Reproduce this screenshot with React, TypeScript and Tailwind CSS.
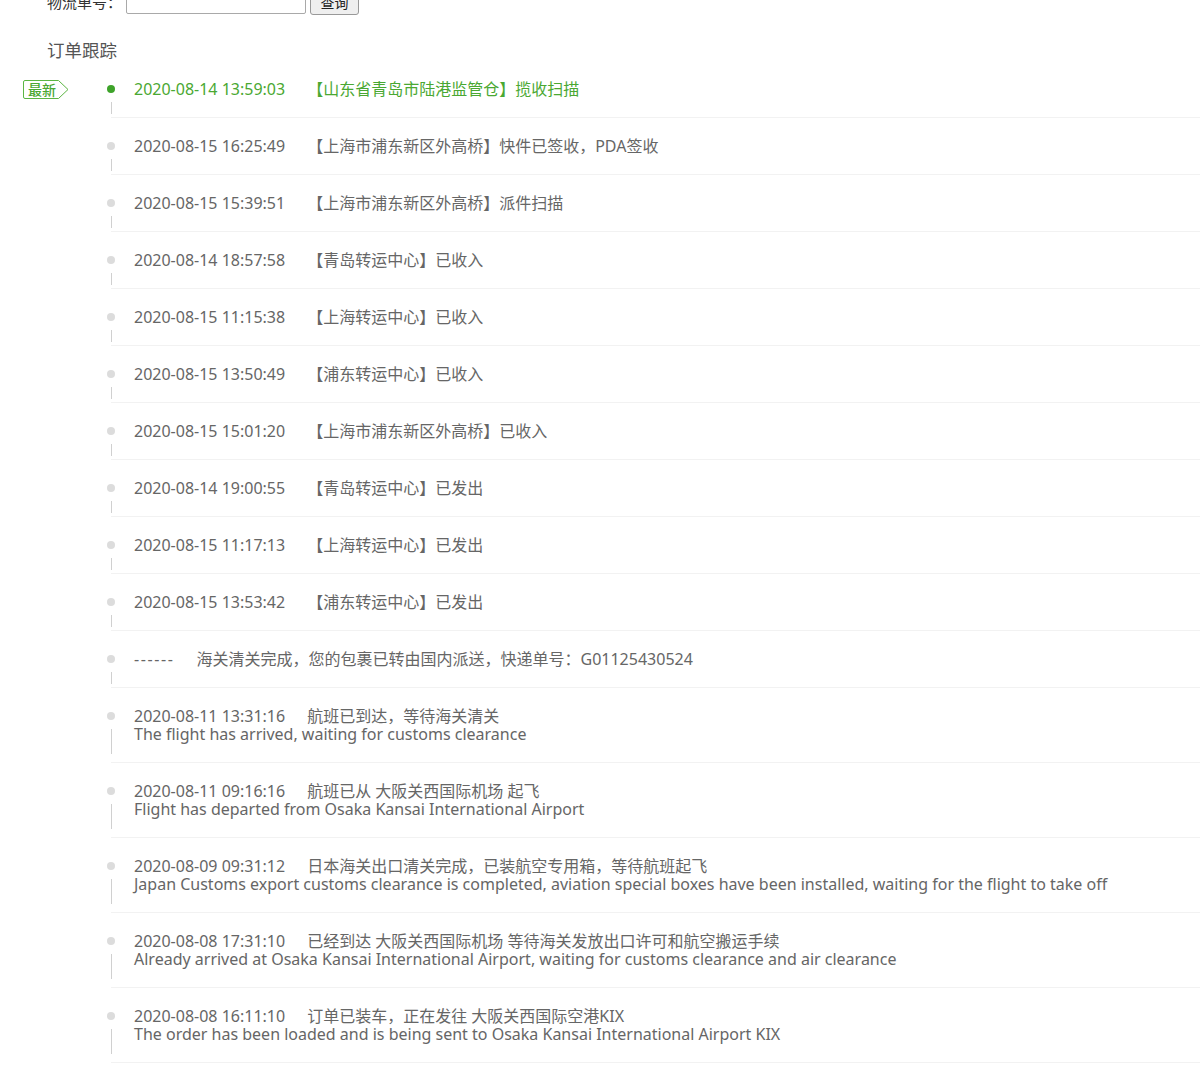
import React from 'react'

// Order tracking timeline
type Track = {
  time: string
  text: string
  en?: string
}

const tracks: Track[] = [
  { time: '2020-08-14 13:59:03', text: '【山东省青岛市陆港监管仓】揽收扫描' },
  { time: '2020-08-15 16:25:49', text: '【上海市浦东新区外高桥】快件已签收，PDA签收' },
  { time: '2020-08-15 15:39:51', text: '【上海市浦东新区外高桥】派件扫描' },
  { time: '2020-08-14 18:57:58', text: '【青岛转运中心】已收入' },
  { time: '2020-08-15 11:15:38', text: '【上海转运中心】已收入' },
  { time: '2020-08-15 13:50:49', text: '【浦东转运中心】已收入' },
  { time: '2020-08-15 15:01:20', text: '【上海市浦东新区外高桥】已收入' },
  { time: '2020-08-14 19:00:55', text: '【青岛转运中心】已发出' },
  { time: '2020-08-15 11:17:13', text: '【上海转运中心】已发出' },
  { time: '2020-08-15 13:53:42', text: '【浦东转运中心】已发出' },
  { time: '------', text: '海关清关完成，您的包裹已转由国内派送，快递单号：G01125430524' },
  {
    time: '2020-08-11 13:31:16',
    text: '航班已到达，等待海关清关',
    en: 'The flight has arrived, waiting for customs clearance',
  },
  {
    time: '2020-08-11 09:16:16',
    text: '航班已从 大阪关西国际机场 起飞',
    en: 'Flight has departed from Osaka Kansai International Airport',
  },
  {
    time: '2020-08-09 09:31:12',
    text: '日本海关出口清关完成，已装航空专用箱，等待航班起飞',
    en: 'Japan Customs export customs clearance is completed, aviation special boxes have been installed, waiting for the flight to take off',
  },
  {
    time: '2020-08-08 17:31:10',
    text: '已经到达 大阪关西国际机场 等待海关发放出口许可和航空搬运手续',
    en: 'Already arrived at Osaka Kansai International Airport, waiting for customs clearance and air clearance',
  },
  {
    time: '2020-08-08 16:11:10',
    text: '订单已装车，正在发往 大阪关西国际空港KIX',
    en: 'The order has been loaded and is being sent to Osaka Kansai International Airport KIX',
  },
]

function NewBadge() {
  return (
    <div className="absolute left-[-88px] top-[19px] w-[46px] h-[19px]">
      <svg width="46" height="19" viewBox="0 0 46 19" className="absolute inset-0">
        <path
          d="M2 0.5 H35.5 L45 9.5 L35.5 18.5 H2 Q0.5 18.5 0.5 17 V2 Q0.5 0.5 2 0.5 Z"
          fill="white"
          stroke="#5cb543"
          strokeWidth="1"
        />
      </svg>
      <span className="relative block pl-[5px] text-[14px] leading-[19px] text-[#4aa832] font-medium">
        最新
      </span>
    </div>
  )
}

export default function App() {
  return (
    <div
      className="min-h-screen bg-white text-[#666] overflow-hidden"
      style={{ fontFamily: '"Noto Sans", "Noto Sans CJK SC", sans-serif' }}
    >
      {/* search form, partly scrolled out of view */}
      <div className="pl-[47px] -mt-[11px] flex items-center h-[26px] text-[15px]">
        <span className="text-[#333] mr-[4px]">物流单号：</span>
        <input
          type="text"
          className="w-[180px] h-[24px] border border-[#a9a9a9] rounded-[2px] bg-white"
        />
        <button className="ml-[4px] w-[49px] h-[26px] border border-[#999] rounded-[3px] bg-[#efefef] text-[#222] text-[14px]">
          查询
        </button>
      </div>

      <h3 className="pl-[47px] mt-[25px] text-[17.5px] leading-[20px] text-[#555] font-normal">订单跟踪</h3>

      <ul className="ml-[111px] mt-[1px]">
        {tracks.map((t, i) => {
          const latest = i === 0
          const dashes = t.time === '------'
          return (
            <li
              key={i}
              className="relative border-b border-[#f2f2f2] pl-[23px] pt-[19px] pb-[19px] text-[16px] leading-[18px]"
            >
              {latest && <NewBadge />}
              <span
                className={`absolute left-[-4px] top-[24px] w-[8px] h-[8px] rounded-full ${
                  latest ? 'bg-[#3ea32a]' : 'bg-[#dcdcdc]'
                }`}
              />
              <span
                className={`absolute left-0 top-[41px] w-px bg-[#d0d0d0] ${
                  t.en ? 'h-[25px]' : 'h-[12px]'
                }`}
              />
              <div className={latest ? 'text-[#4aa832]' : ''}>
                <span className={dashes ? 'mr-[22px] tracking-[1.6px]' : 'mr-[22px]'}>{t.time}</span>
                <span>{t.text}</span>
              </div>
              {t.en && <div>{t.en}</div>}
            </li>
          )
        })}
      </ul>
    </div>
  )
}
